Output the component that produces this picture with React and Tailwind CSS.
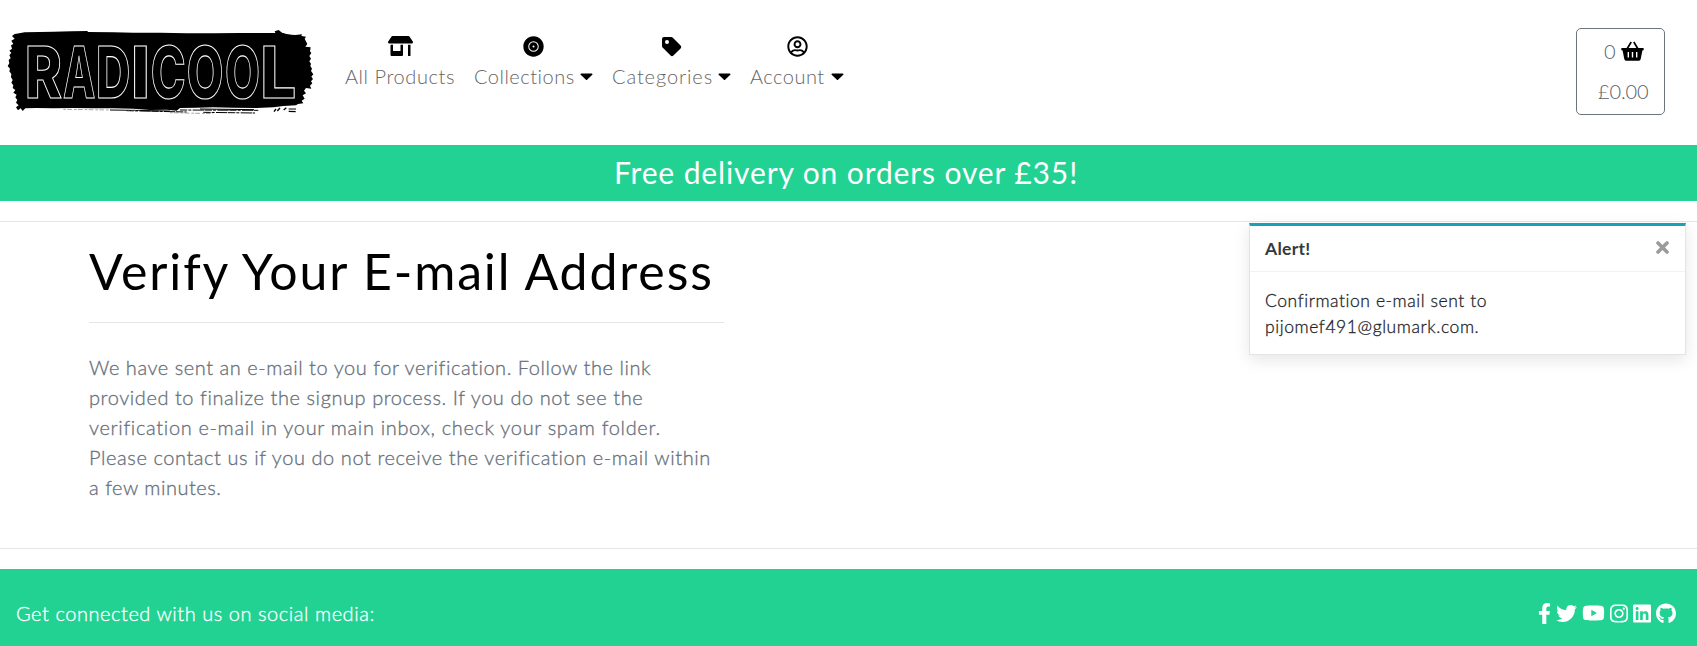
import React from "react";
import {
  FaStoreAlt,
  FaRecordVinyl,
  FaRegUserCircle,
  FaCaretDown,
  FaFacebookF,
  FaTwitter,
  FaYoutube,
  FaInstagram,
  FaLinkedin,
  FaGithub,
} from "react-icons/fa";
import { BiSolidPurchaseTag } from "react-icons/bi";

const letters = [
  ["R", 74, 112],
  ["A", 189, 97],
  ["D", 288, 103],
  ["I", 392, 58],
  ["C", 452, 105],
  ["O", 560, 110],
  ["O", 675, 105],
  ["L", 781, 108],
];

function Logo() {
  return (
    <svg viewBox="0 0 990 330" className="mt-5 h-[110px] w-[330px] shrink-0">
      <path d="M44 42L58 40L74 37L120 36L160 35L215 34L262 33L264 36L340 37L400 38L480 38L560 40L640 40L720 39L800 39L826 39L824 34L836 30L846 38L862 43L880 46L906 43L904 48L918 50L914 56L922 72L916 80L932 82L930 94L934 99L928 108L933 116L928 124L933 131L931 138L936 146L933 153L940 163L934 170L939 177L933 184L937 190L930 197L934 206L918 204L912 212L918 220L908 226L914 236L905 242L910 250L894 252L888 256L850 258L820 262L770 264L700 263L640 262L590 263L540 264L530 272L500 269L450 270L400 266L340 265L280 265L220 264L160 265L110 264L76 265L68 273L62 265L54 271L48 262L56 256L48 248L52 240L46 232L50 224L40 218L46 210L38 204L40 196L34 188L38 180L33 172L34 162L28 154L30 146L23 138L28 130L26 120L32 114L28 106L34 98L28 92L36 86L33 76L40 72L34 62L44 56L36 48Z" />
      <g stroke="black" fill="none">
        <path strokeWidth="3" d="M836 36L858 45L896 47M330 270L510 273M600 267L762 269" />
        <path strokeWidth="3" strokeDasharray="22 3 9 4 34 2" d="M380 272L560 276M540 270L775 271M610 277L765 279" />
        <path strokeWidth="2" strokeDasharray="8 4 14 6" stroke="#777" d="M190 268L420 271M510 278L640 281" />
        <path strokeWidth="4" d="M822 275L828 267M832 273L840 264M851 270L859 263M866 274L887 275" />
        <path strokeWidth="3" d="M866 267L888 267" />
      </g>
      <text y="233" fill="black" stroke="white" strokeWidth="3.2" fontFamily="Inter, sans-serif" fontWeight="800" fontSize="216">
        {letters.map(([ch, x, w], i) => (
          <tspan key={i} x={x} textLength={w} lengthAdjust="spacingAndGlyphs">
            {ch}
          </tspan>
        ))}
      </text>
    </svg>
  );
}

function NavItem({ icon, label, tracking, width, caret = true }) {
  return (
    <a className={"flex flex-col items-center " + width}>
      <span className="flex h-[25px] w-full items-start justify-center text-black">{icon}</span>
      <span className="flex w-full items-center justify-between">
        <span className={"whitespace-nowrap " + tracking}>{label}</span>
        {caret && <FaCaretDown className="h-5 w-[13px] text-black" preserveAspectRatio="none" />}
      </span>
    </a>
  );
}

function Basket() {
  return (
    <svg viewBox="0 0 23 20" className="h-5 w-[23px]">
      <path d="M6 8L10.2 1M17 8L12.8 1" stroke="black" strokeWidth="1.7" fill="none" />
      <path
        fillRule="evenodd"
        d="M0.8 7H22.2Q23 7.2 22.8 8.4Q22.5 9.4 21.4 9.5L19.7 18Q19.4 19.8 18 19.8H5Q3.6 19.8 3.3 18L1.6 9.5Q.5 9.4 .2 8.4Q0 7.2 .8 7ZM6.6 11V16.6H8V11ZM10.8 11V16.6H12.2V11ZM15 11V16.6H16.4V11Z"
      />
    </svg>
  );
}

export default function App() {
  return (
    <div className="flex h-[646px] w-full flex-col overflow-hidden bg-white font-['Lato',sans-serif] text-[20px] leading-[30px] font-light">
      <header className="flex h-[145px] shrink-0 items-start">
        <Logo />
        <nav className="mt-9 ml-[15px] flex flex-1 gap-[19px] text-[#666]">
          <NavItem width="w-[110px]" tracking="tracking-[0.57px]" label="All Products" caret={false} icon={<FaStoreAlt className="h-5 w-[25px]" />} />
          <NavItem width="w-[119px]" tracking="tracking-[0.5px]" label="Collections" icon={<FaRecordVinyl className="h-[21px] w-[21px]" />} />
          <NavItem width="w-[119px]" tracking="tracking-[0.9px]" label="Categories" icon={<BiSolidPurchaseTag className="-mt-px h-6 w-6" />} />
          <NavItem width="w-[94px]" tracking="tracking-[0.5px]" label="Account" icon={<FaRegUserCircle className="h-[21px] w-[21px]" />} />
        </nav>
        <button className="mt-7 mr-8 flex h-[87px] w-[89px] flex-col rounded-[5px] border border-[#6c757d] pt-[7px] text-left text-[#56606a]">
          <span className="flex h-10 items-start gap-[5px] pl-[27px]">
            <span>0</span>
            <span className="mt-[5px] text-black"><Basket /></span>
          </span>
          <span className="pl-[21px] tracking-[-0.1px]">£0.00</span>
        </button>
      </header>

      <div className="flex h-14 shrink-0 items-center justify-center bg-[#22d292] pr-[5px] pb-[2px] text-[30px] leading-9 font-normal tracking-[0.88px] text-white">
        Free delivery on orders over £35!
      </div>

      <div className="mt-5 h-px shrink-0 bg-[#e5e5e5]" />

      <main className="flex h-[326px] shrink-0 items-start justify-between">
        <section className="ml-[89px] w-[635px] pt-[19px]">
          <h1 className="text-[50px] leading-[60px] font-normal tracking-[1.87px] whitespace-nowrap text-black">
            Verify Your E-mail Address
          </h1>
          <div className="mt-[21px] h-px bg-[#e5e5e5]" />
          <p className="mt-[29px] flex flex-col whitespace-nowrap text-[#66707a] [-webkit-text-stroke:0.3px_#66707a]">
            <span className="tracking-[0.55px]">We have sent an e-mail to you for verification. Follow the link</span>
            <span className="tracking-[0.57px]">provided to finalize the signup process. If you do not see the</span>
            <span className="tracking-[0.66px]">verification e-mail in your main inbox, check your spam folder.</span>
            <span className="tracking-[0.58px]">Please contact us if you do not receive the verification e-mail within</span>
            <span className="tracking-[0.52px]">a few minutes.</span>
          </p>
        </section>

        <aside className="mt-px mr-[11px] h-[132px] w-[437px] border border-t-[3px] border-black/10 border-t-[#17a2b8] bg-white text-[17.5px] leading-[26.25px] shadow-[0_5px_15px_rgba(0,0,0,0.1)]">
          <div className="flex h-[46px] items-center justify-between border-b border-black/5 pr-4 pl-[15px]">
            <strong className="mt-[2px] font-bold tracking-[0.3px] text-[#343a40]">Alert!</strong>
            <svg viewBox="0 0 13 13" className="mb-[3px] h-[13px] w-[13px]">
              <path d="M2 2L11 11M11 2L2 11" stroke="#999b9d" strokeWidth="3.6" strokeLinecap="round" />
            </svg>
          </div>
          <p className="flex flex-col pt-4 pl-[15px] whitespace-nowrap text-[#212529] [-webkit-text-stroke:0.3px_#212529]">
            <span className="tracking-[0.57px]">Confirmation e-mail sent to</span>
            <span className="tracking-[0.58px]">pijomef491@glumark.com.</span>
          </p>
        </aside>
      </main>

      <div className="h-px shrink-0 bg-[#e5e5e5]" />

      <footer className="mt-5 flex flex-1 items-start justify-between bg-[#22d292] pt-[29px] pr-[21px] pl-4 text-white">
        <span className="tracking-[0.55px] [-webkit-text-stroke:0.3px_white]">Get connected with us on social media:</span>
        <span className="flex h-[30px] items-center gap-[5px]">
          <FaFacebookF className="h-[21px] w-[13px]" />
          <FaTwitter className="h-[21px] w-[21px]" />
          <FaYoutube className="h-[20px] w-[23px]" />
          <FaInstagram className="h-[21px] w-[18px]" />
          <FaLinkedin className="h-[21px] w-[18px]" />
          <FaGithub className="h-[21px] w-[20px]" />
        </span>
      </footer>
    </div>
  );
}
